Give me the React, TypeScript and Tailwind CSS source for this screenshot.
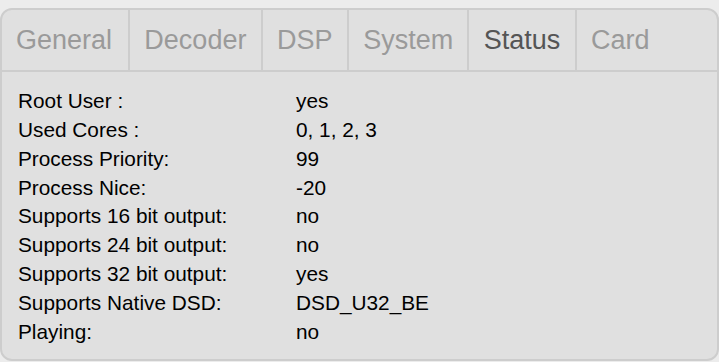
import { useState } from 'react';

const tabs = ['General', 'Decoder', 'DSP', 'System', 'Status', 'Card'];

const rows: [string, string][] = [
  ['Root User :', 'yes'],
  ['Used Cores :', '0, 1, 2, 3'],
  ['Process Priority:', '99'],
  ['Process Nice:', '-20'],
  ['Supports 16 bit output:', 'no'],
  ['Supports 24 bit output:', 'no'],
  ['Supports 32 bit output:', 'yes'],
  ['Supports Native DSD:', 'DSD_U32_BE'],
  ['Playing:', 'no'],
];

export default function App() {
  const [active, setActive] = useState('Status');

  return (
    <div
      className="w-[719px] h-[362px] bg-[#ececec] pt-2 overflow-hidden"
      style={{ fontFamily: '"Liberation Sans", Arial, sans-serif' }}
    >
      <div className="w-[719px] h-[353px] bg-[#e0e0e0] border-2 border-[#cdcdcd] rounded-[12px] overflow-hidden flex flex-col">
        <div className="flex h-[62px] border-b-2 border-[#cdcdcd] shrink-0">
          {tabs.map((t, i) => (
            <button
              key={t}
              onClick={() => setActive(t)}
              className={
                'h-full flex items-center text-[27px] leading-none ' +
                (i === 0 ? 'pl-[14px] pr-[16px] ' : 'px-[14.3px] ') +
                (i < tabs.length - 1 ? 'border-r-2 border-[#cdcdcd] ' : '') +
                (active === t ? 'text-[#555555]' : 'text-[#9a9a9a]')
              }
            >
              {t}
            </button>
          ))}
        </div>
        <div className="pt-[14px] pl-[16px] text-[20.8px] text-black">
          {rows.map(([k, v]) => (
            <div key={k} className="flex h-[28.9px] items-center">
              <div className="w-[278px] shrink-0">{k}</div>
              <div>{v}</div>
            </div>
          ))}
        </div>
      </div>
    </div>
  );
}
